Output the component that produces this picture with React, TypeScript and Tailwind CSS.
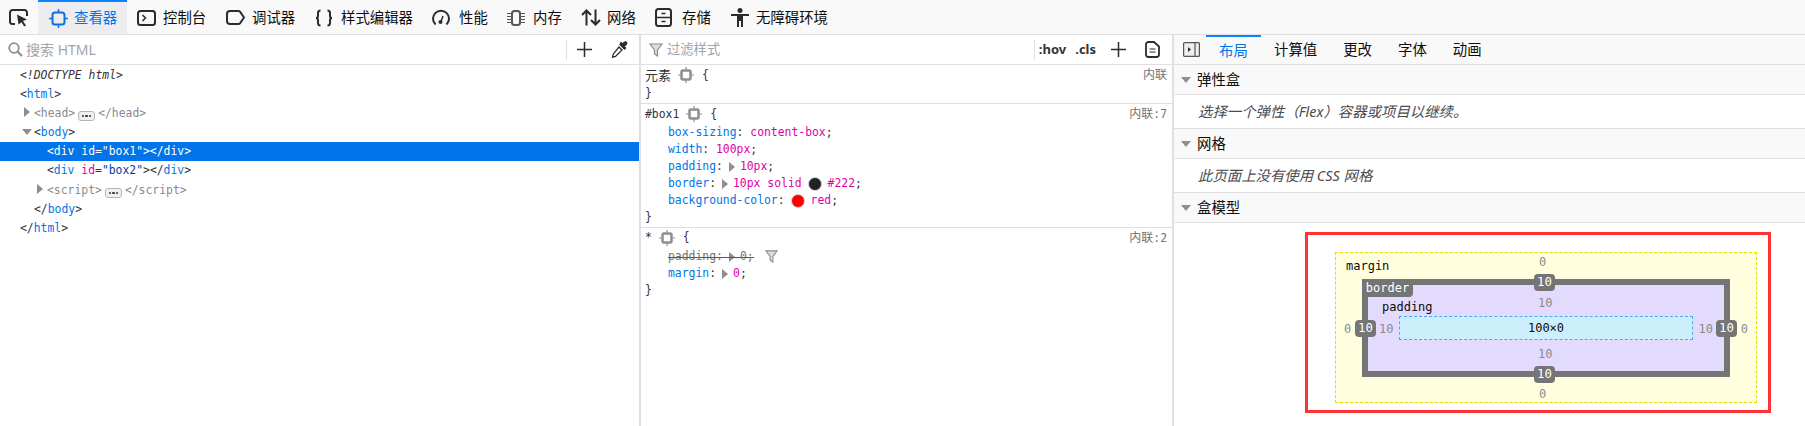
import { ReactNode } from "react";

const mono = "font-['DejaVu_Sans_Mono','Noto_Sans_CJK_SC',monospace] text-[11.4px]";

const PickIcon = () => (
  <svg width="20" height="18" viewBox="0 0 20 18" fill="none" stroke="#2b2b30" strokeWidth="2">
    <path d="M6 15H3.500A2.500 2.500 0 0 1 1 12.500V3.500A2.500 2.500 0 0 1 3.500 1h12A2.500 2.500 0 0 1 18 3.500V7" />
    <path d="M8 5.500l10 5-4 1.500 3 4.500-1.800 1-2.700-4.300L9.500 15.500z" fill="#2b2b30" stroke="none" />
  </svg>
);
const InspectorIcon = () => (
  <svg width="19" height="19" viewBox="0 0 19 19" fill="none" stroke="#0a6fe0" strokeWidth="2">
    <rect x="3.500" y="3.500" width="12" height="12" rx="2.500" />
    <path d="M9.500 0v3M9.500 16v3M0 9.500h3M16 9.500h3" strokeWidth="1.500" />
  </svg>
);
const ConsoleIcon = () => (
  <svg width="19" height="16" viewBox="0 0 19 16" fill="none" stroke="#2b2b30" strokeWidth="2">
    <rect x="1" y="1" width="17" height="14" rx="2.500" />
    <path d="M5.500 5l3 3-3 3" strokeWidth="1.500" />
  </svg>
);
const DebuggerIcon = () => (
  <svg width="19" height="15" viewBox="0 0 19 15" fill="none" stroke="#2b2b30" strokeWidth="2">
    <path d="M4 1h8.500a2 2 0 0 1 1.500.700l4 5.800-4 5.800a2 2 0 0 1-1.500.700H4a3 3 0 0 1-3-3V4a3 3 0 0 1 3-3z" />
  </svg>
);
const BracesIcon = () => (
  <svg width="18" height="18" viewBox="0 0 18 18" fill="none" stroke="#2b2b30" strokeWidth="2">
    <path d="M5.500 1.500C3.500 1.500 3 2.500 3 4v3c0 1-.500 2-2 2 1.500 0 2 1 2 2v3c0 1.500.500 2.500 2.500 2.500" />
    <path d="M12.500 1.500c2 0 2.500 1 2.500 2.500v3c0 1 .500 2 2 2-1.500 0-2 1-2 2v3c0 1.500-.500 2.500-2.500 2.500" />
  </svg>
);
const PerfIcon = () => (
  <svg width="18" height="17" viewBox="0 0 18 17" fill="none" stroke="#2b2b30" strokeWidth="2">
    <path d="M3.500 15.500A8 8 0 1 1 14.500 15.500" />
    <circle cx="8.500" cy="13" r="2" fill="#2b2b30" stroke="none" />
    <path d="M9 12.500L11 7" strokeWidth="1.500" />
  </svg>
);
const MemoryIcon = () => (
  <svg width="18" height="16" viewBox="0 0 18 16" fill="none" stroke="#55555a" strokeWidth="1.500">
    <rect x="5" y="1" width="8" height="14" rx="2.500" strokeWidth="2" />
    <path d="M0 3.500h4M0 6.500h4M0 9.500h4M0 12.500h4M14 3.500h4M14 6.500h4M14 9.500h4M14 12.500h4" strokeWidth="1" />
  </svg>
);
const NetworkIcon = () => (
  <svg width="20" height="17" viewBox="0 0 20 17" fill="none" stroke="#2b2b30" strokeWidth="2">
    <path d="M5.500 16.500V1.500M1 6l4.500-4.500L10 6" />
    <path d="M14.500 .5v15M10 11l4.500 4.500L19 11" />
  </svg>
);
const StorageIcon = () => (
  <svg width="17" height="19" viewBox="0 0 17 19" fill="none" stroke="#2b2b30" strokeWidth="2">
    <rect x="1" y="1" width="15" height="17" rx="2.500" />
    <path d="M1 9.500h15M6.500 5.500h4M6.500 13.500h4" strokeWidth="1.500" />
  </svg>
);
const AccessIcon = () => (
  <svg width="20" height="19" viewBox="0 0 20 19" fill="#2b2b30">
    <circle cx="10" cy="2.500" r="2.500" />
    <path d="M1 6h18v2h-6v11h-2v-6H9v6H7V8H1z" />
  </svg>
);

const SearchIcon = () => (
  <svg width="15" height="15" viewBox="0 0 15 15" fill="none" stroke="#8d8d92" strokeWidth="1.800">
    <circle cx="6" cy="6" r="4.800" />
    <path d="M9.500 9.500l4.500 4.500" strokeWidth="2.200" />
  </svg>
);
const PlusIcon = () => (
  <svg width="15" height="15" viewBox="0 0 15 15" stroke="#2b2b30" strokeWidth="1.500">
    <path d="M7.500 0v15M0 7.500h15" />
  </svg>
);
const DropperIcon = () => (
  <svg width="17" height="17" viewBox="0 0 17 17" fill="none" stroke="#2b2b30" strokeWidth="1.300">
    <path d="M8 6l3 3-6.500 6.500-3 .700.700-3z" />
    <path d="M9 3.500l4.500 4.500 1-1-1.500-1.500 2.300-2.300a1.400 1.400 0 0 0-2-2L11.500 3 10 1.500z" fill="#2b2b30" />
  </svg>
);
const FilterIcon = ({ size = 14 }: { size?: number }) => (
  <svg width={size} height={size} viewBox="0 0 14 14" fill="#dcdcde" stroke="#8d8d92" strokeWidth="1.200">
    <path d="M1 1h12L8.500 7v6l-3-2V7z" />
  </svg>
);
const DocIcon = () => (
  <svg width="15" height="17" viewBox="0 0 15 17" fill="none" stroke="#2b2b30" strokeWidth="1.800">
    <path d="M3.500 1H9l5 4.500v8a2.500 2.500 0 0 1-2.500 2.500h-8A2.500 2.500 0 0 1 1 13.500v-10A2.500 2.500 0 0 1 3.500 1z" />
    <path d="M4.500 8h6M4.500 11h6" strokeWidth="1.200" />
  </svg>
);
const NodeIcon = () => (
  <svg width="16" height="16" viewBox="0 0 16 16" fill="none" stroke="#8d8d92" strokeWidth="2.500" className="inline-block align-[-3px]">
    <rect x="3.500" y="3.500" width="9" height="9" rx="1.500" />
    <path d="M8 0v2.500M8 13.500V16M0 8h2.500M13.500 8H16" strokeWidth="1.200" />
  </svg>
);
const SidebarIcon = () => (
  <svg width="17" height="15" viewBox="0 0 17 15" fill="#eeeeef" stroke="#55555a" strokeWidth="1.200">
    <rect x=".6" y=".6" width="15.800" height="13.800" rx="1" />
    <path d="M12 .6v13.800" />
    <path d="M5 5l3 2.500-3 2.500z" fill="#2b2b30" stroke="none" />
  </svg>
);
const ArrowRight = () => (
  <svg width="6" height="10" viewBox="0 0 6 10" fill="#8d8d92" className="inline-block">
    <path d="M0 0l6 5-6 5z" />
  </svg>
);
const ArrowDown = () => (
  <svg width="10" height="6" viewBox="0 0 10 6" fill="#8d8d92" className="inline-block">
    <path d="M0 0h10L5 6z" />
  </svg>
);

const tools = [
  { label: "控制台", icon: <ConsoleIcon />, box: "w-[89px]", slot: "w-[26px]" },
  { label: "调试器", icon: <DebuggerIcon />, box: "w-[89px]", slot: "w-[26px]" },
  { label: "样式编辑器", icon: <BracesIcon />, box: "w-[117px]", slot: "w-[26px]" },
  { label: "性能", icon: <PerfIcon />, box: "w-[75px]", slot: "w-[27px]" },
  { label: "内存", icon: <MemoryIcon />, box: "w-[74px]", slot: "w-[26px]" },
  { label: "网络", icon: <NetworkIcon />, box: "w-[74px]", slot: "w-[26px]" },
  { label: "存储", icon: <StorageIcon />, box: "w-[75px]", slot: "w-[27px]" },
  { label: "无障碍环境", icon: <AccessIcon />, box: "w-[110px]", slot: "w-[26px]" },
];

const Toolbar = () => (
  <div className="flex h-[35px] items-stretch border-b border-[#e0e0e2] bg-[#f9f9fa] text-[14.4px] text-[#0c0c0d]">
    <div className="flex w-[38px] items-center justify-center pt-[1px]">
      <PickIcon />
    </div>
    <div className="flex w-[89px] items-center gap-[6px] border-t-2 border-[#0a84ff] bg-[#ededf0] pl-[11px] text-[#0074e8]">
      <InspectorIcon />
      <span>查看器</span>
    </div>
    {tools.map((t) => (
      <div key={t.label} className={`flex items-center pl-[10px] pt-[1px] ${t.box}`}>
        <span className={`flex shrink-0 ${t.slot}`}>{t.icon}</span>
        <span className="whitespace-nowrap">{t.label}</span>
      </div>
    ))}
  </div>
);

const Bracket = ({ children, light }: { children: ReactNode; light?: boolean }) => (
  <span className={light ? "text-[#8a8a8f]" : "text-[#333338]"}>{children}</span>
);
const Name = ({ children }: { children: ReactNode }) => <span className="text-[#0074e8]">{children}</span>;
const Dots = () => (
  <span className="mx-[3px] inline-flex h-[10px] w-[17px] items-center justify-center gap-[1px] rounded-[3px] border border-[#b5b5b8] bg-[#f0f0f2] align-[-0.5px]">
    <i className="h-[2.500px] w-[2.500px] rounded-full bg-[#333338]" />
    <i className="h-[2.500px] w-[2.500px] rounded-full bg-[#333338]" />
    <i className="h-[2.500px] w-[2.500px] rounded-full bg-[#333338]" />
  </span>
);

const TreeRow = ({ indent, arrow, selected, children }: { indent: string; arrow?: ReactNode; selected?: boolean; children: ReactNode }) => (
  <div className={`relative flex h-[19.2px] items-center whitespace-pre pt-px ${indent} ${selected ? "bg-[#0074e8] text-white" : ""}`}>
    {arrow && <span className="absolute ml-[-12px] mt-[-2px] flex w-[10px] justify-center">{arrow}</span>}
    <span>{children}</span>
  </div>
);

const MarkupPanel = () => (
  <div className="flex w-[639px] flex-col">
    <div className="flex h-[30px] items-center border-b border-[#e0e0e2] pl-[8px]">
      <SearchIcon />
      <span className="ml-[3px] flex-1 text-[14px] text-[#a3a3a8]">搜索 HTML</span>
      <span className="h-[20px] w-px bg-[#e0e0e2]" />
      <span className="ml-[10px] flex"><PlusIcon /></span>
      <span className="ml-[19px] mr-[11px] flex"><DropperIcon /></span>
    </div>
    <div className={`${mono} text-[#333338]`}>
      <TreeRow indent="pl-[20px]"><span className="italic">{"<!DOCTYPE html>"}</span></TreeRow>
      <TreeRow indent="pl-[20px]"><Bracket>{"<"}</Bracket><Name>html</Name><Bracket>{">"}</Bracket></TreeRow>
      <TreeRow indent="pl-[34px]" arrow={<ArrowRight />}>
        <Bracket light>{"<head>"}</Bracket><Dots /><Bracket light>{"</head>"}</Bracket>
      </TreeRow>
      <TreeRow indent="pl-[34px]" arrow={<ArrowDown />}><Bracket>{"<"}</Bracket><Name>body</Name><Bracket>{">"}</Bracket></TreeRow>
      <TreeRow indent="pl-[47px]" selected>{'<div id="box1"></div>'}</TreeRow>
      <TreeRow indent="pl-[47px]">
        <Bracket>{"<"}</Bracket><Name>div</Name>{" "}<span className="text-[#dd00a9]">id</span>=<span className="text-[#003eaa]">"box2"</span><Bracket>{">"}</Bracket>
        <Bracket>{"</"}</Bracket><Name>div</Name><Bracket>{">"}</Bracket>
      </TreeRow>
      <TreeRow indent="pl-[47px]" arrow={<ArrowRight />}>
        <Bracket light>{"<script>"}</Bracket><Dots /><Bracket light>{"</script>"}</Bracket>
      </TreeRow>
      <TreeRow indent="pl-[34px]"><Bracket>{"</"}</Bracket><Name>body</Name><Bracket>{">"}</Bracket></TreeRow>
      <TreeRow indent="pl-[20px]"><Bracket>{"</"}</Bracket><Name>html</Name><Bracket>{">"}</Bracket></TreeRow>
    </div>
  </div>
);

const Prop = ({ name, children }: { name: string; children: ReactNode }) => (
  <div className="flex h-[17px] items-center whitespace-pre pl-[27px]">
    <span className="text-[#0074e8]">{name}</span>
    <span className="text-[#333338]">:</span>
    {children}
  </div>
);
const Val = ({ children }: { children: ReactNode }) => <span className="text-[#dd00a9]">{children}</span>;
const Semi = () => <span className="text-[#333338]">;</span>;
const PropArrow = () => <span className="ml-[6px] mr-[5px] flex"><ArrowRight /></span>;

const RuleHead = ({ selector, source, cjk }: { selector: string; source: ReactNode; cjk?: boolean }) => (
  <div className="flex h-[20.5px] items-center justify-between whitespace-pre pl-[4px] pr-[5px]">
    <span className="flex items-center">
      <span className={cjk ? "text-[13px] text-[#333338]" : "text-[#333338]"}>{selector}</span>
      <span className="ml-[7px] flex"><NodeIcon /></span>
      <span className="ml-[8px] text-[#333338]">{"{"}</span>
    </span>
    <span className="text-[#737373]">{source}</span>
  </div>
);
const RuleEnd = () => <div className="flex h-[17px] items-center pl-[4px] text-[#333338]">{"}"}</div>;
const Inline = () => <span className="text-[12px]">内联</span>;

const RulesPanel = () => (
  <div className="flex w-[535px] flex-col border-x-2 border-[#e0e0e2]">
    <div className="flex h-[30px] items-center border-b border-[#e0e0e2] pl-[8px]">
      <FilterIcon />
      <span className="ml-[4px] flex-1 text-[13.3px] text-[#a3a3a8]">过滤样式</span>
      <span className="h-[20px] w-px bg-[#e0e0e2]" />
      <span className="ml-[4px] text-[13px] font-bold text-[#333338]">:hov</span>
      <span className="ml-[9px] text-[13px] font-bold text-[#333338]">.cls</span>
      <span className="ml-[15px] flex"><PlusIcon /></span>
      <span className="ml-[19px] mr-[12px] flex"><DocIcon /></span>
    </div>
    <div className={mono}>
      <div className="border-b border-[#e0e0e2] pb-[0.5px]">
        <RuleHead selector="元素" source={<Inline />} cjk />
        <RuleEnd />
      </div>
      <div className="border-b border-[#e0e0e2]">
        <RuleHead selector="#box1" source={<><Inline />:7</>} />
        <Prop name="box-sizing"><span> </span><Val>content-box</Val><Semi /></Prop>
        <Prop name="width"><span> </span><Val>100px</Val><Semi /></Prop>
        <Prop name="padding"><PropArrow /><Val>10px</Val><Semi /></Prop>
        <Prop name="border">
          <PropArrow />
          <Val>10px solid</Val>
          <span className="mx-[6px] h-[14px] w-[14px] rounded-full border border-[#d4d4d4] bg-[#222]" />
          <Val>#222</Val>
          <Semi />
        </Prop>
        <Prop name="background-color">
          <span className="ml-[6px] mr-[6px] h-[14px] w-[14px] rounded-full border border-[#d4d4d4] bg-[#f00]" />
          <Val>red</Val>
          <Semi />
        </Prop>
        <RuleEnd />
      </div>
      <div>
        <RuleHead selector="*" source={<><Inline />:2</>} />
        <div className="flex h-[17px] items-center whitespace-pre pl-[27px]">
          <span className="relative flex items-center text-[#737373]">
            padding:<PropArrow />0;
            <span className="absolute left-0 right-0 top-[9px] h-px bg-[#55555a]" />
          </span>
          <span className="ml-[11px] flex"><FilterIcon size={13} /></span>
        </div>
        <Prop name="margin"><PropArrow /><Val>0</Val><Semi /></Prop>
        <RuleEnd />
      </div>
    </div>
  </div>
);

const Section = ({ title }: { title: string }) => (
  <div className="flex h-[30px] items-center gap-[6px] border-b border-[#e0e0e2] bg-[#f9f9fa] pl-[7px] text-[14.4px] text-[#0c0c0d]">
    <ArrowDown />
    <span>{title}</span>
  </div>
);
const Note = ({ children }: { children: ReactNode }) => (
  <div className="flex h-[34px] items-center border-b border-[#e0e0e2] pl-[24px] text-[14.4px] italic text-[#4a4a4f]">{children}</div>
);

const Badge = ({ className }: { className: string }) => (
  <span className={`absolute flex h-[17px] w-[21px] items-center justify-center rounded-[4px] bg-[#757575] text-[12.4px] text-white ${className}`}>10</span>
);
const Num = ({ className, children }: { className: string; children: ReactNode }) => (
  <span className={`absolute leading-[14px] text-[#8a8a8f] ${className}`}>{children}</span>
);

const BoxModel = () => (
  <div className="ml-[131px] mt-[9px] h-[181px] w-[466px] border-[3px] border-[#f33] pl-[27px] pt-[17px]">
    <div className={`relative flex h-[151px] w-[422px] items-center justify-center border border-dashed border-[#e0e000] bg-[#ffffdf] ${mono} text-[12px]`}>
      <span className="absolute left-[10px] top-[6px] leading-[14px] text-[#0c0c0d]">margin</span>
      <Num className="left-1/2 top-[2px] -translate-x-[7px]">0</Num>
      <Num className="bottom-[1px] left-1/2 -translate-x-[7px]">0</Num>
      <Num className="left-[8px] top-[69px]">0</Num>
      <Num className="right-[8px] top-[69px]">0</Num>
      <div className="relative flex h-[98px] w-[368px] items-center justify-center border-[6px] border-[#757575] bg-[#e2dbfd]">
        <span className="absolute -left-[6px] -top-[6px] flex h-[18px] w-[51px] items-center justify-center rounded-br-[4px] bg-[#757575] text-white">border</span>
        <Badge className="-top-[11px] left-[166px]" />
        <Badge className="-bottom-[12px] left-[166px]" />
        <Badge className="-left-[13px] top-[35px]" />
        <Badge className="-right-[13px] top-[35px]" />
        <span className="absolute left-[14px] top-[15px] leading-[14px] text-[#0c0c0d]">padding</span>
        <Num className="left-[170px] top-[11px]">10</Num>
        <Num className="bottom-[10px] left-[170px]">10</Num>
        <Num className="left-[11px] top-[37px]">10</Num>
        <Num className="right-[11px] top-[37px]">10</Num>
        <div className="flex h-[24px] w-[294px] items-center justify-center border border-dashed border-[#4da6ff] bg-[#cdeffb] text-[#0c0c0d]">100×0</div>
      </div>
    </div>
  </div>
);

const LayoutPanel = () => (
  <div className="flex min-w-0 flex-1 flex-col">
    <div className="flex h-[30px] items-stretch border-b border-[#e0e0e2] bg-[#f9f9fa] text-[14.4px] text-[#0c0c0d]">
      <div className="flex w-[32px] items-center justify-end pr-[6px]"><SidebarIcon /></div>
      <div className="flex w-[55px] items-center justify-center border-t-2 border-[#0a84ff] text-[#0074e8]">布局</div>
      <div className="flex items-center px-[13px]">计算值</div>
      <div className="flex items-center px-[13px]">更改</div>
      <div className="flex items-center px-[13px]">字体</div>
      <div className="flex items-center px-[13px]">动画</div>
    </div>
    <Section title="弹性盒" />
    <Note>选择一个弹性（Flex）容器或项目以继续。</Note>
    <Section title="网格" />
    <Note>此页面上没有使用 CSS 网格</Note>
    <Section title="盒模型" />
    <BoxModel />
  </div>
);

export default function App() {
  return (
    <div className="flex h-[426px] w-[1805px] flex-col overflow-hidden bg-white font-['Noto_Sans','Noto_Sans_CJK_SC',sans-serif]">
      <Toolbar />
      <div className="flex flex-1">
        <MarkupPanel />
        <RulesPanel />
        <LayoutPanel />
      </div>
    </div>
  );
}
